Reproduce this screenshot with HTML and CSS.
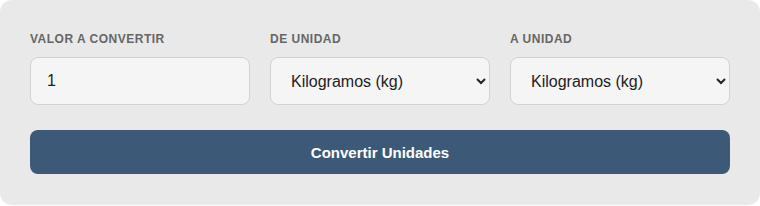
FILE: index.html
```html
<!DOCTYPE html>
<html lang="es">
<head>
<meta charset="utf-8">
<title>Conversor de unidades</title>
<link rel="stylesheet" href="styles.css">
</head>
<body>
<div class="card">
  <div class="row">
    <div class="group">
      <label class="label" for="valor">Valor a convertir</label>
      <input class="field" id="valor" type="text" value="1">
    </div>
    <div class="group">
      <label class="label" for="de">De unidad</label>
      <select class="field select" id="de">
        <option>Kilogramos (kg)</option>
      </select>
    </div>
    <div class="group">
      <label class="label" for="a">A unidad</label>
      <select class="field select" id="a">
        <option>Kilogramos (kg)</option>
      </select>
    </div>
  </div>
  <button class="btn" type="button">Convertir Unidades</button>
</div>
</body>
</html>
```
FILE: styles.css
```css
html, body {
  margin: 0;
  padding: 0;
  background: #ffffff;
}
body {
  font-family: "Liberation Sans", Arial, sans-serif;
}
.card {
  background: #e9e9e9;
  border-radius: 12px;
  padding: 30px;
  height: 205px;
  box-sizing: border-box;
}
.row {
  display: grid;
  grid-template-columns: repeat(3, 1fr);
  gap: 20px;
  margin-bottom: 25px;
}
.group {
  display: flex;
  flex-direction: column;
}
.label {
  font-size: 12px;
  font-weight: bold;
  text-transform: uppercase;
  letter-spacing: 0.5px;
  color: #666666;
  line-height: 18px;
  margin-bottom: 9px;
}
.field {
  box-sizing: border-box;
  height: 48px;
  width: 100%;
  border: 1px solid #d2d2d2;
  border-radius: 8px;
  background: #f5f5f5;
  font-family: "Liberation Sans", Arial, sans-serif;
  font-size: 16px;
  color: #222222;
  padding: 0 16px;
  margin: 0;
  outline: none;
}
.select {
  padding: 0 12px 0 16px;
}
.btn {
  display: block;
  width: 100%;
  height: 44px;
  border: none;
  border-radius: 8px;
  background: #3c5a78;
  color: #ffffff;
  font-family: "Liberation Sans", Arial, sans-serif;
  font-size: 15px;
  font-weight: bold;
  cursor: pointer;
}
```
